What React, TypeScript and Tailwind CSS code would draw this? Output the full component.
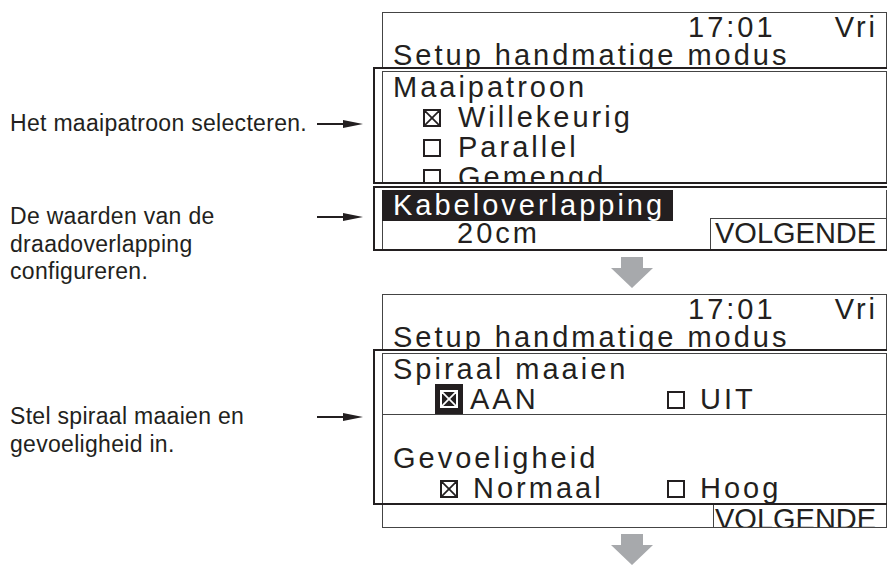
import React from "react";

const ink = "#231f20";

const Pointer = () => (
  <svg width="46" height="10" viewBox="0 0 46 10">
    <line x1="0" y1="5" x2="28" y2="5" stroke={ink} strokeWidth="2" />
    <polygon points="26,1 46,5 26,9" fill={ink} />
  </svg>
);

const DownArrow = () => (
  <svg width="42" height="31" viewBox="0 0 42 31" className="ml-[238px] shrink-0">
    <polygon points="10,0 32,0 32,11 42,11 21,31 0,11 10,11" fill="#a7a9ac" />
  </svg>
);

// checkbox glyph: checked shows an X
const Box = ({ checked, light, className }: { checked?: boolean; light?: boolean; className?: string }) => (
  <span
    className={`inline-block w-[18px] h-[18px] border-2 align-baseline ${
      light ? "border-white text-white" : "border-[#231f20] text-[#231f20]"
    } ${className ?? ""}`}
  >
    {checked && (
      <svg width="14" height="14" viewBox="0 0 14 14" className="block">
        <line x1="0" y1="0" x2="14" y2="14" stroke="currentColor" strokeWidth="1.8" />
        <line x1="14" y1="0" x2="0" y2="14" stroke="currentColor" strokeWidth="1.8" />
      </svg>
    )}
  </span>
);

const Header = () => (
  <div className="ml-[9px] w-[505px] h-[55px] border border-b-0 border-[#444] overflow-hidden whitespace-nowrap">
    <div className="h-[28px] leading-[29px] flex justify-end gap-[59px] pr-[8px]">
      <span>17:01</span>
      <span>Vri</span>
    </div>
    <div className="pl-[10px] leading-[29px]">Setup handmatige modus</div>
  </div>
);

const Label = ({ children, className }: { children: React.ReactNode; className?: string }) => (
  <div className={`flex ${className ?? ""}`}>
    <div className="w-[317px] pl-[10px] leading-[27.5px]">{children}</div>
    <div className="h-[27.5px] flex items-center">
      <Pointer />
    </div>
  </div>
);

export default function App() {
  return (
    <div className="w-[887px] h-[565px] overflow-hidden bg-white flex text-[#231f20] font-['Liberation_Sans',Arial,sans-serif]">
      {/* explanations on the left */}
      <div className="w-[373px] shrink-0 flex flex-col text-[23px] tracking-[0.3px]">
        <Label className="mt-[110px]">Het maaipatroon selecteren.</Label>
        <Label className="mt-[65.5px]">
          De waarden van de
          <br />
          draadoverlapping
          <br />
          configureren.
        </Label>
        <Label className="mt-[117.5px]">
          Stel spiraal maaien en
          <br />
          gevoeligheid in.
        </Label>
      </div>

      {/* display screens */}
      <div className="w-[514px] shrink-0 overflow-hidden flex flex-col text-[29px] tracking-[3px]">
        <div className="mt-[12px]">
          <Header />
        </div>

        {/* Maaipatroon */}
        <div className="w-[530px] border-2 border-r-0 border-[#231f20] pl-[7px] pt-[2px]">
          <div className="w-[505px] h-[111px] border-l border-t border-r border-[#444] overflow-hidden leading-[30px] whitespace-nowrap">
            <div className="pl-[10px]">Maaipatroon</div>
            <div className="pl-[40px]">
              <Box checked className="mr-[17px]" />
              Willekeurig
            </div>
            <div className="pl-[40px]">
              <Box className="mr-[17px]" />
              Parallel
            </div>
            <div className="pl-[40px]">
              <Box className="mr-[17px]" />
              Gemengd
            </div>
          </div>
        </div>

        {/* Kabeloverlapping */}
        <div className="mt-[2px] w-[530px] border-2 border-r-0 border-[#231f20] pl-[7px] pt-[2px]">
          <div className="w-[505px] h-[59px] border-l border-r border-[#444] whitespace-nowrap">
            <div className="h-[31px] flex">
              <span className="-ml-[1px] h-[31px] bg-[#231f20] text-white leading-[31px] pl-[11px] pr-[8px]">
                Kabeloverlapping
              </span>
            </div>
            <div className="-mt-[3px] h-[31px] flex">
              <div className="w-[327px] pl-[74px] pt-[1px] leading-[29px]">20cm</div>
              <div className="flex-1 border-l border-t border-[#444] pl-[4px] leading-[29px] tracking-normal">
                VOLGENDE
              </div>
            </div>
          </div>
        </div>

        <div className="mt-[6px]">
          <DownArrow />
        </div>

        <div className="mt-[6px]">
          <Header />
        </div>

        {/* Spiraal maaien + Gevoeligheid */}
        <div className="w-[530px] border-2 border-r-0 border-[#231f20] pl-[7px] pt-[2px]">
          <div className="w-[505px] h-[150px] border-l border-t border-r border-[#444] whitespace-nowrap leading-[30px]">
            <div className="pl-[10px]">Spiraal maaien</div>
            <div className="h-[31px] border-b border-[#444] flex">
              <div className="w-[284px] pl-[52px] flex">
                <span className="w-[28px] h-[30px] bg-[#231f20] flex items-center justify-center">
                  <Box checked light />
                </span>
                <span className="ml-[7px]">AAN</span>
              </div>
              <div>
                <Box className="mr-[15px]" />
                UIT
              </div>
            </div>
            <div className="h-[28px]" />
            <div className="pl-[10px]">Gevoeligheid</div>
            <div className="flex">
              <div className="w-[284px] pl-[57px]">
                <Box checked className="mr-[15px]" />
                Normaal
              </div>
              <div>
                <Box className="mr-[15px]" />
                Hoog
              </div>
            </div>
          </div>
        </div>

        <div className="ml-[9px] w-[505px] h-[32px] border-l border-r border-b border-[#444] flex overflow-hidden">
          <div className="w-[330px]" />
          <div className="flex-1 border-l border-[#444] pl-[1px] leading-[29px] tracking-normal whitespace-nowrap">
            VOLGENDE
          </div>
        </div>

        <div className="mt-[6px]">
          <DownArrow />
        </div>
      </div>
    </div>
  );
}
